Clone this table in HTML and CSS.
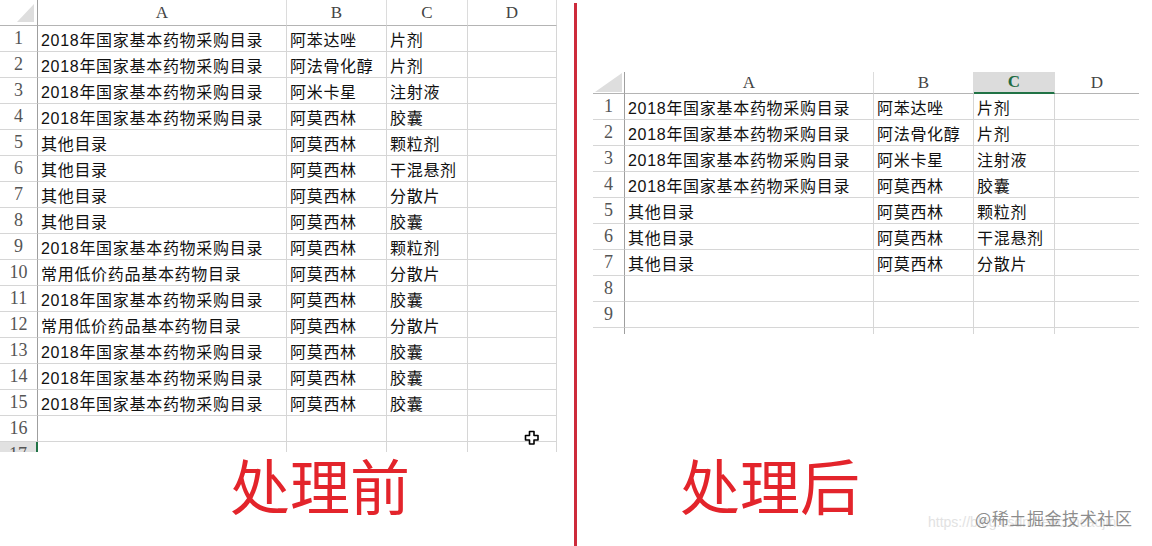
FILE: index.html
```html
<!DOCTYPE html>
<html lang="zh">
<head>
<meta charset="utf-8">
<title>处理前 / 处理后</title>
<link rel="stylesheet" href="styles.css">
</head>
<body>
<div class="page">
  <section class="panel panel-left">
    <div class="sheet sheet-l">
      <div class="corner"><span class="tri"></span></div>
      <div class="ch">A</div><div class="ch">B</div><div class="ch">C</div><div class="ch last">D</div>

      <div class="rh">1</div><div class="c">2018年国家基本药物采购目录</div><div class="c">阿苯达唑</div><div class="c">片剂</div><div class="c last"></div>
      <div class="rh">2</div><div class="c">2018年国家基本药物采购目录</div><div class="c">阿法骨化醇</div><div class="c">片剂</div><div class="c last"></div>
      <div class="rh">3</div><div class="c">2018年国家基本药物采购目录</div><div class="c">阿米卡星</div><div class="c">注射液</div><div class="c last"></div>
      <div class="rh">4</div><div class="c">2018年国家基本药物采购目录</div><div class="c">阿莫西林</div><div class="c">胶囊</div><div class="c last"></div>
      <div class="rh">5</div><div class="c">其他目录</div><div class="c">阿莫西林</div><div class="c">颗粒剂</div><div class="c last"></div>
      <div class="rh">6</div><div class="c">其他目录</div><div class="c">阿莫西林</div><div class="c">干混悬剂</div><div class="c last"></div>
      <div class="rh">7</div><div class="c">其他目录</div><div class="c">阿莫西林</div><div class="c">分散片</div><div class="c last"></div>
      <div class="rh">8</div><div class="c">其他目录</div><div class="c">阿莫西林</div><div class="c">胶囊</div><div class="c last"></div>
      <div class="rh">9</div><div class="c">2018年国家基本药物采购目录</div><div class="c">阿莫西林</div><div class="c">颗粒剂</div><div class="c last"></div>
      <div class="rh">10</div><div class="c">常用低价药品基本药物目录</div><div class="c">阿莫西林</div><div class="c">分散片</div><div class="c last"></div>
      <div class="rh">11</div><div class="c">2018年国家基本药物采购目录</div><div class="c">阿莫西林</div><div class="c">胶囊</div><div class="c last"></div>
      <div class="rh">12</div><div class="c">常用低价药品基本药物目录</div><div class="c">阿莫西林</div><div class="c">分散片</div><div class="c last"></div>
      <div class="rh">13</div><div class="c">2018年国家基本药物采购目录</div><div class="c">阿莫西林</div><div class="c">胶囊</div><div class="c last"></div>
      <div class="rh">14</div><div class="c">2018年国家基本药物采购目录</div><div class="c">阿莫西林</div><div class="c">胶囊</div><div class="c last"></div>
      <div class="rh">15</div><div class="c">2018年国家基本药物采购目录</div><div class="c">阿莫西林</div><div class="c">胶囊</div><div class="c last"></div>
      <div class="rh">16</div><div class="c"></div><div class="c"></div><div class="c"></div><div class="c last"></div>
      <div class="rh sel">17</div><div class="c"></div><div class="c"></div><div class="c"></div><div class="c last"></div>
    </div>
    <div class="label label-left">处理前</div>
  </section>

  <div class="divider"></div>

  <section class="panel panel-right">
    <div class="sheet sheet-r">
      <div class="corner"><span class="tri"></span></div>
      <div class="ch">A</div><div class="ch">B</div><div class="ch active">C</div><div class="ch open">D</div>

      <div class="rh">1</div><div class="c">2018年国家基本药物采购目录</div><div class="c">阿苯达唑</div><div class="c">片剂</div><div class="c open"></div>
      <div class="rh">2</div><div class="c">2018年国家基本药物采购目录</div><div class="c">阿法骨化醇</div><div class="c">片剂</div><div class="c open"></div>
      <div class="rh">3</div><div class="c">2018年国家基本药物采购目录</div><div class="c">阿米卡星</div><div class="c">注射液</div><div class="c open"></div>
      <div class="rh">4</div><div class="c">2018年国家基本药物采购目录</div><div class="c">阿莫西林</div><div class="c">胶囊</div><div class="c open"></div>
      <div class="rh">5</div><div class="c">其他目录</div><div class="c">阿莫西林</div><div class="c">颗粒剂</div><div class="c open"></div>
      <div class="rh">6</div><div class="c">其他目录</div><div class="c">阿莫西林</div><div class="c">干混悬剂</div><div class="c open"></div>
      <div class="rh">7</div><div class="c">其他目录</div><div class="c">阿莫西林</div><div class="c">分散片</div><div class="c open"></div>
      <div class="rh">8</div><div class="c"></div><div class="c"></div><div class="c"></div><div class="c open"></div>
      <div class="rh">9</div><div class="c"></div><div class="c"></div><div class="c"></div><div class="c open"></div>
      <div class="rh tail"></div><div class="c tail"></div><div class="c tail"></div><div class="c tail"></div><div class="c open tail"></div>
    </div>
    <div class="label label-right">处理后</div>
  </section>

  <svg class="cursor" width="16" height="15" viewBox="0 0 16 15" aria-hidden="true">
    <path d="M5.5 1.5h4.5v4h4v4.5h-4v4H5.5v-4h-4V5.5h4z" fill="#fff" stroke="#000" stroke-width="1.6" stroke-linejoin="round"/>
  </svg>

  <div class="watermark">
    <span class="wm-url">https://blog.csdn.net/cuncaojin</span>
    <span class="wm-main">@稀土掘金技术社区</span>
  </div>
</div>
</body>
</html>
```

FILE: styles.css
```css
* { box-sizing: border-box; }

html, body {
  margin: 0;
  padding: 0;
  background: #ffffff;
}

.page {
  position: relative;
  width: 1152px;
  height: 546px;
  display: flex;
  overflow: hidden;
  font-family: "Liberation Sans", "Noto Sans CJK SC", sans-serif;
}

.panel {
  display: flex;
  flex-direction: column;
  height: 546px;
}

.panel-left { width: 574px; }
.panel-right { flex: 1; padding-top: 72px; padding-left: 16px; }

.divider {
  width: 3px;
  margin-top: 3px;
  height: 543px;
  background: #cd2a3b;
}

/* ---------- sheets ---------- */
.sheet {
  display: grid;
  overflow: hidden;
}

.sheet-l {
  grid-template-columns: 38px 249px 100px 81px 89px;
  grid-template-rows: 26px;
  grid-auto-rows: 26px;
  height: 452px;
  width: 557px;
}

.sheet-r {
  grid-template-columns: 32px 249px 100px 81px 84px;
  grid-template-rows: 22px repeat(9, 26px) 6px;
  width: 546px;
}

.c, .ch, .rh, .corner {
  border-right: 1px solid #d6d6d6;
  border-bottom: 1px solid #d6d6d6;
}

.c {
  padding-left: 3px;
  font-size: 16px;
  letter-spacing: 0.7px;
  color: #111;
  white-space: nowrap;
  display: flex;
  align-items: center;
  overflow: hidden;
}

.ch {
  font-family: "Liberation Serif", "Noto Sans CJK SC", serif;
  font-size: 17px;
  color: #444;
  display: flex;
  align-items: center;
  justify-content: center;
  border-bottom-color: #b4b4b4;
  border-right-color: #dcdcdc;
}

.rh {
  font-family: "Liberation Serif", "Noto Sans CJK SC", serif;
  font-size: 18px;
  color: #555;
  display: flex;
  align-items: center;
  justify-content: center;
  border-right-color: #9f9f9f;
}

.corner {
  position: relative;
  border-bottom-color: #b4b4b4;
  border-right-color: #9f9f9f;
}

.tri {
  position: absolute;
  right: 3px;
  bottom: 3px;
  width: 17px;
  height: 18px;
  background: #dedede;
  clip-path: polygon(100% 0, 100% 100%, 0 100%);
}

.sheet-r .tri { width: 27px; height: 19px; right: 2px; bottom: 1px; }

.ch.active {
  background: #dcdcdc;
  color: #1e6b44;
  font-weight: bold;
  border-bottom: 2px solid #217346;
}

.open { border-right: none; }

.rh.sel {
  background: #e1e1e1;
  border-right: 2px solid #217346;
  align-items: flex-start;
  padding-top: 2px;
}

.tail { border-bottom: none; }

/* ---------- labels ---------- */
.label {
  margin-top: auto;
  margin-bottom: 32px;
  font-family: "Noto Sans CJK SC", sans-serif;
  font-size: 60px;
  line-height: 60px;
  color: #e3242b;
  white-space: nowrap;
}

.label-left { padding-left: 230px; }
.label-right { padding-left: 87px; }

/* ---------- overlays ---------- */
.cursor {
  position: absolute;
  left: 524px;
  top: 430px;
}

.watermark {
  position: absolute;
  left: 928px;
  top: 505px;
  width: 224px;
  height: 30px;
}

.wm-url {
  position: absolute;
  left: 0;
  top: 9px;
  font-family: "Liberation Sans", sans-serif;
  font-size: 14px;
  color: #e2e2e2;
  white-space: nowrap;
}

.wm-main {
  position: absolute;
  left: 47px;
  top: 0;
  font-family: "Noto Sans CJK SC", sans-serif;
  font-size: 17px;
  letter-spacing: 0.6px;
  color: rgba(120, 120, 120, 0.85);
  white-space: nowrap;
}
```
